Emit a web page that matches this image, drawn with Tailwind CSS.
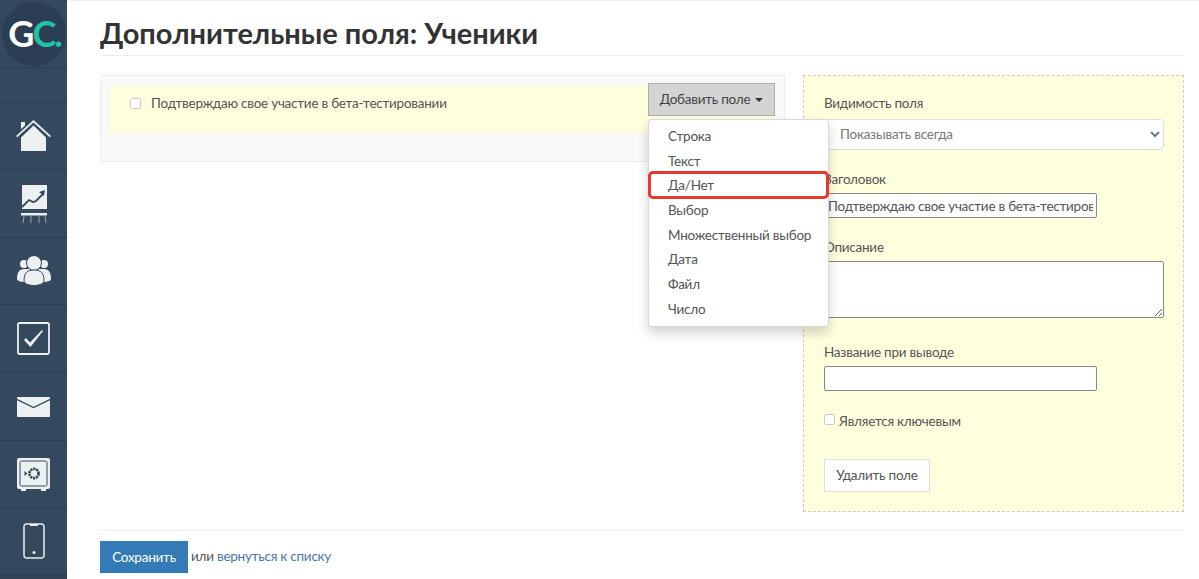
<!DOCTYPE html>
<html lang="ru">
<head>
<meta charset="utf-8">
<title>Дополнительные поля: Ученики</title>
<script src="https://cdn.jsdelivr.net/npm/@tailwindcss/browser@4"></script>
</head>
<body class="h-[579px] overflow-hidden bg-white font-['Lato','Open_Sans',sans-serif] text-[13.5px] tracking-[-0.24px] text-[#555]">
<div class="flex h-[579px]">
  <!-- sidebar -->
  <nav class="w-[67px] shrink-0 h-[579px] overflow-hidden bg-[#34495e]">
    <div class="h-[68px] border-b border-[#2c3e50] flex items-center justify-center overflow-hidden">
      <div class="w-[64px] h-[64px] rounded-full bg-[#2b3e53] flex items-center justify-center pb-[2px] pl-[2px] font-['Lato',sans-serif] font-bold text-[36px] tracking-[-2px] leading-none">
        <span class="text-white">G</span><span class="text-[#1fc2a7]">C.</span>
      </div>
    </div>
    <div class="h-[35px] border-b border-[#2c3e50]"></div>
    <div class="h-[67px] border-b border-[#2c3e50] flex items-center justify-center">
      <svg width="35" height="32" viewBox="0 0 35 32" fill="#ecf0f1"><path d="M0 16 17.500 0 35 16l-1.200 1.200L17.500 2.400 1.200 17.200z"/><path d="M5 2h4v3.500L5 9.200z"/><path d="M5 17.500 17.500 5.500 30 17.500V31H5z"/></svg>
    </div>
    <div class="h-[68px] border-b border-[#2c3e50] flex items-center justify-center">
      <svg width="26" height="38" viewBox="0 0 26 38"><path fill="#ecf0f1" d="M1 0h25v24H1z"/><path fill="#ecf0f1" d="M0 28h26v2.500H0z"/><path stroke="#ecf0f1" stroke-width="1" opacity=".55" d="M3 31 2 38M10 31v7M18 31v7M24 31l1 7"/><path fill="none" stroke="#34495e" stroke-width="1.800" d="M1 22 8 15l4 2 3-1 7-7"/><path fill="#34495e" d="m18 7 6-2-1 6z"/></svg>
    </div>
    <div class="h-[67px] border-b border-[#2c3e50] flex items-center justify-center">
      <svg width="34" height="30" viewBox="0 0 34 30" fill="#ecf0f1"><circle cx="7" cy="8" r="4"/><circle cx="27" cy="8" r="4"/><path d="M0 23c0-6 2-10 7-10h20c5 0 7 4 7 10 0 2-4 3-7 3H7c-3 0-7-1-7-3z"/><circle cx="17" cy="7" r="7.500" stroke="#34495e" stroke-width="1"/><path d="M7 25c0-8 3-11 10-11s10 3 10 11c0 3-6 4.500-10 4.500S7 28 7 25z" stroke="#34495e" stroke-width="1"/></svg>
    </div>
    <div class="h-[68px] border-b border-[#2c3e50] flex items-center justify-center">
      <svg width="33" height="33" viewBox="0 0 33 33" fill="none"><rect x="1" y="1" width="31" height="31" rx="1.500" stroke="#ecf0f1" stroke-width="1.800"/><path d="m7 18 2-2 4 4.500L25 8l1 1-12.500 16z" fill="#ecf0f1"/></svg>
    </div>
    <div class="h-[68px] border-b border-[#2c3e50] flex items-center justify-center">
      <svg width="33" height="20" viewBox="0 0 33 20"><path fill="#ecf0f1" d="M1 0h31a1 1 0 0 1 1 1v18a1 1 0 0 1-1 1H1a1 1 0 0 1-1-1V1a1 1 0 0 1 1-1z"/><path fill="none" stroke="#34495e" stroke-width="1.300" d="M-1 2 16.500 10.500 34 2"/></svg>
    </div>
    <div class="h-[67px] border-b border-[#2c3e50] flex items-center justify-center">
      <svg width="33" height="33" viewBox="0 0 33 33" fill="none"><rect width="33" height="31" rx="2" fill="#ecf0f1"/><rect x="3" y="3" width="27" height="25" rx="1.500" stroke="#34495e"/><path d="M4 31h5v2H4zM24 31h5v2h-5z" fill="#ecf0f1"/><circle cx="17" cy="15.500" r="4.600" stroke="#34495e" stroke-width="2.600" stroke-dasharray="2.200 .7"/><path d="m7.500 13 3 2.500-3 2.500z" fill="#34495e"/></svg>
    </div>
    <div class="h-[67px] border-b border-[#2c3e50] flex items-center justify-center">
      <svg width="22" height="36" viewBox="0 0 22 36" fill="none"><path d="M3.500 1h15A2.500 2.500 0 0 1 21 3.500v29a2.500 2.500 0 0 1-2.500 2.500h-15A2.500 2.500 0 0 1 1 32.500v-29A2.500 2.500 0 0 1 3.500 1z" stroke="#ecf0f1" stroke-width="1.500"/><path d="M7 1h8v2H7z" fill="#ecf0f1"/><circle cx="11" cy="29.500" r="1.500" fill="#ecf0f1"/></svg>
    </div>
    <div class="h-[4px] bg-[#2f4256]"></div>
  </nav>

  <!-- content -->
  <main class="relative flex-1 min-w-0 border-t border-[#eee] pl-[33px] pr-[15px]">
    <h1 class="h-[55px] border-b border-[#eee] pt-[14px] text-[29px] tracking-normal leading-[36px] font-bold text-[#333]">Дополнительные поля: Ученики</h1>
    <div class="mt-[19px] h-[437px] flex items-start gap-[18px]">
      <!-- left panel -->
      <section class="w-[685px] h-[87px] border border-[#eee] bg-[#f9f9f9] pt-[9px] pl-[9px] pr-[9px]">
        <div class="h-[48px] bg-[#ffffdd] flex items-start pt-[8px] pl-[20px]">
          <input type="checkbox" class="appearance-none w-[11px] h-[11px] mt-[5px] mr-[10px] rounded-[2px] border border-[#ccc] bg-white">
          <span class="leading-[20px]">Подтверждаю свое участие в бета-тестировании</span>
        </div>
      </section>
      <!-- right panel -->
      <section class="w-[381px] h-[437px] border border-dashed border-[#ccc] bg-[#ffffdd] pl-[20px] pr-[19px] pt-[17px]">
        <label class="block leading-[20px]">Видимость поля</label>
        <select class="block mt-[6px] w-[340px] h-[31px] rounded-[4px] border border-[#ddd] bg-white pl-[11px] pb-[2px] text-[#777]"><option>Показывать всегда</option></select>
        <label class="block mt-[19px] leading-[20px]">Заголовок</label>
        <input type="text" value="Подтверждаю свое участие в бета-тестировании" class="block mt-[4px] w-[273px] h-[25px] rounded-[2px] border border-[#888] bg-white px-[3px]">
        <label class="block mt-[19px] leading-[20px]">Описание</label>
        <textarea class="block mt-[4px] w-[340px] h-[57px] rounded-[2px] border border-[#888] bg-white"></textarea>
        <label class="block mt-[24px] leading-[20px]">Название при выводе</label>
        <input type="text" class="block mt-[4px] w-[273px] h-[25px] rounded-[2px] border border-[#888] bg-white">
        <div class="mt-[20px] flex items-center h-[20px]">
          <input type="checkbox" class="appearance-none w-[11px] h-[11px] mr-[4px] -mt-[3px] rounded-[2px] border border-[#ccc] bg-white">
          <span>Является ключевым</span>
        </div>
        <button class="block mt-[28px] w-[106px] h-[33px] border border-[#ddd] bg-white">Удалить поле</button>
      </section>
    </div>
    <div class="mt-[18px] border-t border-[#eee] pt-[10px] flex items-center">
      <button class="w-[88px] h-[32px] bg-[#337ab7] text-white">Сохранить</button>
      <span class="ml-[3px] -mt-[2px]">или <a href="#" class="text-[#4a76a8]">вернуться к списку</a></span>
    </div>

    <!-- dropdown -->
    <button class="absolute left-[581px] top-[82px] w-[127px] h-[33px] border border-[#adadad] bg-[#d4d4d4] text-[#444] flex items-center justify-center gap-[5px]">Добавить поле <span class="w-0 h-0 border-x-[4px] border-x-transparent border-t-[4px] border-t-[#333]"></span></button>
    <ul class="absolute left-[581px] top-[118px] w-[181px] h-[208px] rounded-[4px] border border-black/15 bg-white py-[4px] shadow-[0_6px_12px_rgba(0,0,0,0.18)]">
      <li class="h-[24.700px] leading-[24.700px] pl-[19px]">Строка</li>
      <li class="h-[24.700px] leading-[24.700px] pl-[19px]">Текст</li>
      <li class="h-[24.700px] leading-[24.700px] pl-[19px]">Да/Нет</li>
      <li class="h-[24.700px] leading-[24.700px] pl-[19px]">Выбор</li>
      <li class="h-[24.700px] leading-[24.700px] pl-[19px]">Множественный выбор</li>
      <li class="h-[24.700px] leading-[24.700px] pl-[19px]">Дата</li>
      <li class="h-[24.700px] leading-[24.700px] pl-[19px]">Файл</li>
      <li class="h-[24.700px] leading-[24.700px] pl-[19px]">Число</li>
    </ul>
    <div class="absolute left-[581px] top-[170px] w-[181px] h-[28px] rounded-[5px] border-[3px] border-[#e53a2f]"></div>
  </main>
</div>
</body>
</html>
